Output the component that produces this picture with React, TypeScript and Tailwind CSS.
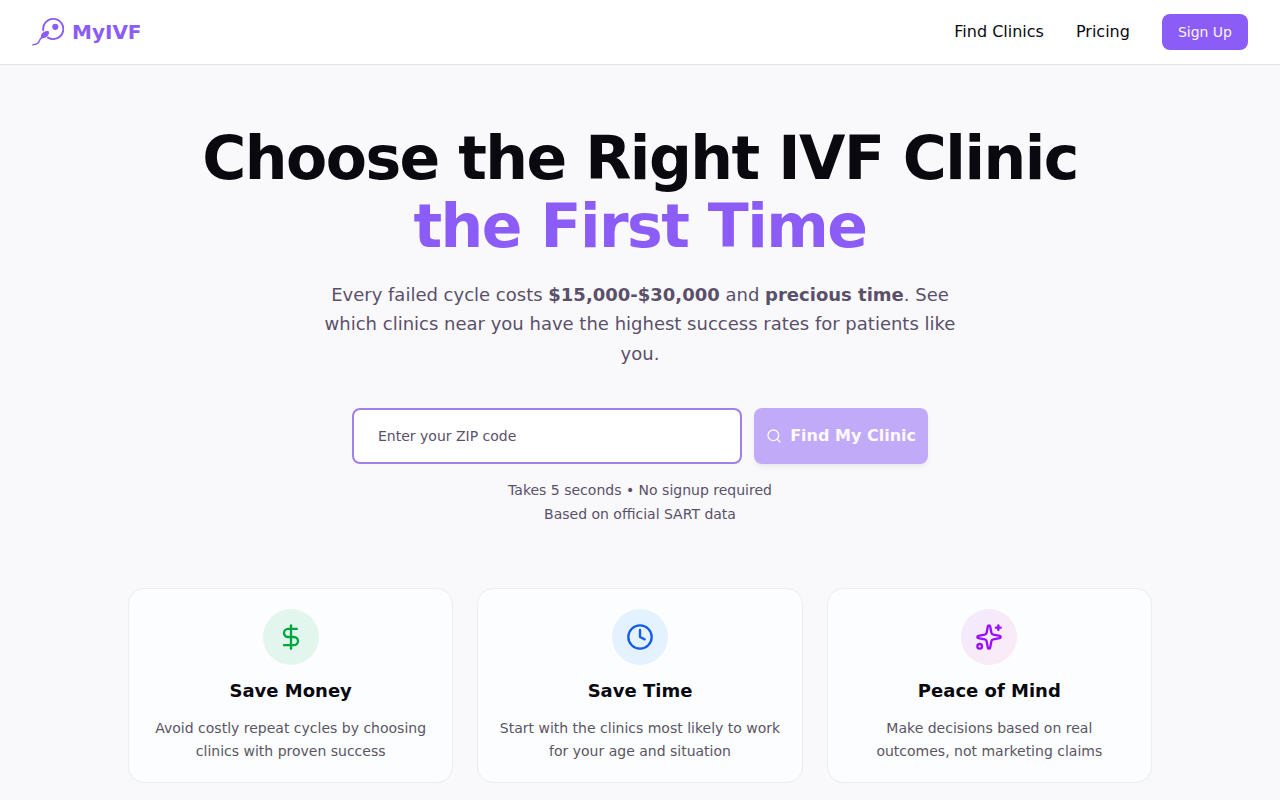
import { Clock, DollarSign, Search, Sparkles } from "lucide-react";

const cards = [
  {
    title: "Save Money",
    text: "Avoid costly repeat cycles by choosing clinics with proven success",
    icon: <DollarSign className="size-7 text-green-600" />,
    disc: "bg-[#e3f6ed]",
  },
  {
    title: "Save Time",
    text: "Start with the clinics most likely to work for your age and situation",
    icon: <Clock className="size-7 text-[#165ce8]" />,
    disc: "bg-[#e3f2fe]",
  },
  {
    title: "Peace of Mind",
    text: "Make decisions based on real outcomes, not marketing claims",
    icon: <Sparkles className="size-7 text-purple-600" />,
    disc: "bg-gradient-to-br from-[#f3eafd] to-[#fbebf5]",
  },
];

function Logo() {
  return (
    <svg viewBox="0 0 32 32" className="size-8" fill="none" stroke="currentColor" strokeLinecap="round" aria-hidden="true">
      <path d="M11.200 14.200A10.100 10.100 0 1 1 16 21.600" strokeWidth="1.9" />
      <circle cx="23.300" cy="10.800" r="3.100" fill="currentColor" stroke="none" />
      <path d="M16.800 15.300C14.300 14.300 10.800 15.700 9.400 18.300C8.700 19.600 8.800 21.200 9.300 22.100C11.700 22.500 14.800 21.500 16.200 19.200C17 17.900 17.200 16.400 16.800 15.300Z" fill="currentColor" stroke="none" />
      <path d="M10 21.500C7.500 22.500 7.800 25 6.300 26.800C5 28.300 2.500 28 .8 29" strokeWidth="1.4" />
    </svg>
  );
}

export default function App() {
  return (
    <div className="min-h-screen bg-[#f9f9fc] font-['DejaVu_Sans',sans-serif] text-[#09090f]">
      <header className="border-b border-[#e2e2e8] bg-white">
        <div className="flex h-16 items-center justify-between px-8">
          <a href="#" className="flex items-center gap-2 text-xl font-bold text-[#8b5cf6]">
            <Logo />
            MyIVF
          </a>
          <nav className="flex items-center gap-8">
            <a href="#clinics">Find Clinics</a>
            <a href="#pricing">Pricing</a>
            <button className="h-9 rounded-lg bg-[#8b5cf6] px-4 text-sm text-[#f9f5ff]">Sign Up</button>
          </nav>
        </div>
      </header>
      <main className="mx-auto max-w-5xl pt-[59px] pb-4 text-center">
        <h1 className="text-6xl leading-[68px] font-bold tracking-tight">
          Choose the Right IVF Clinic
          <span className="block text-[#8b5cf6]">the First Time</span>
        </h1>
        <p className="mx-auto mt-5 max-w-2xl text-lg leading-relaxed text-[#5b5069]">
          Every failed cycle costs <strong>$15,000-$30,000</strong> and <strong>precious time</strong>. See which clinics near you have the highest success rates for patients like you.
        </p>
        <form className="mx-auto mt-10 flex max-w-xl gap-3" onSubmit={(e) => e.preventDefault()}>
          <input aria-label="ZIP code" placeholder="Enter your ZIP code" className="h-14 min-w-0 flex-1 rounded-lg border-2 border-[#a180ea] bg-white px-6 text-sm outline-none placeholder:text-[#5b5069]" />
          <button disabled className="flex h-14 items-center gap-2 rounded-lg bg-[#c1aaf8] px-3 font-semibold text-[#fdf9ff] shadow-md shadow-black/5">
            <Search className="size-4" />
            Find My Clinic
          </button>
        </form>
        <div className="mt-4 space-y-1 text-sm text-[#5b5069]">
          <p>Takes 5 seconds • No signup required</p>
          <p>Based on official SART data</p>
        </div>
        <section className="mt-16 grid grid-cols-3 gap-6">
          {cards.map((card) => (
            <article key={card.title} className="rounded-2xl border border-[#ececf2] bg-[#fbfdff] p-5">
              <div className={`mx-auto flex size-14 items-center justify-center rounded-full ${card.disc}`}>{card.icon}</div>
              <h2 className="mt-3 text-lg font-semibold">{card.title}</h2>
              <p className="mt-3 text-sm leading-relaxed text-[#5b5563]">{card.text}</p>
            </article>
          ))}
        </section>
      </main>
    </div>
  );
}
